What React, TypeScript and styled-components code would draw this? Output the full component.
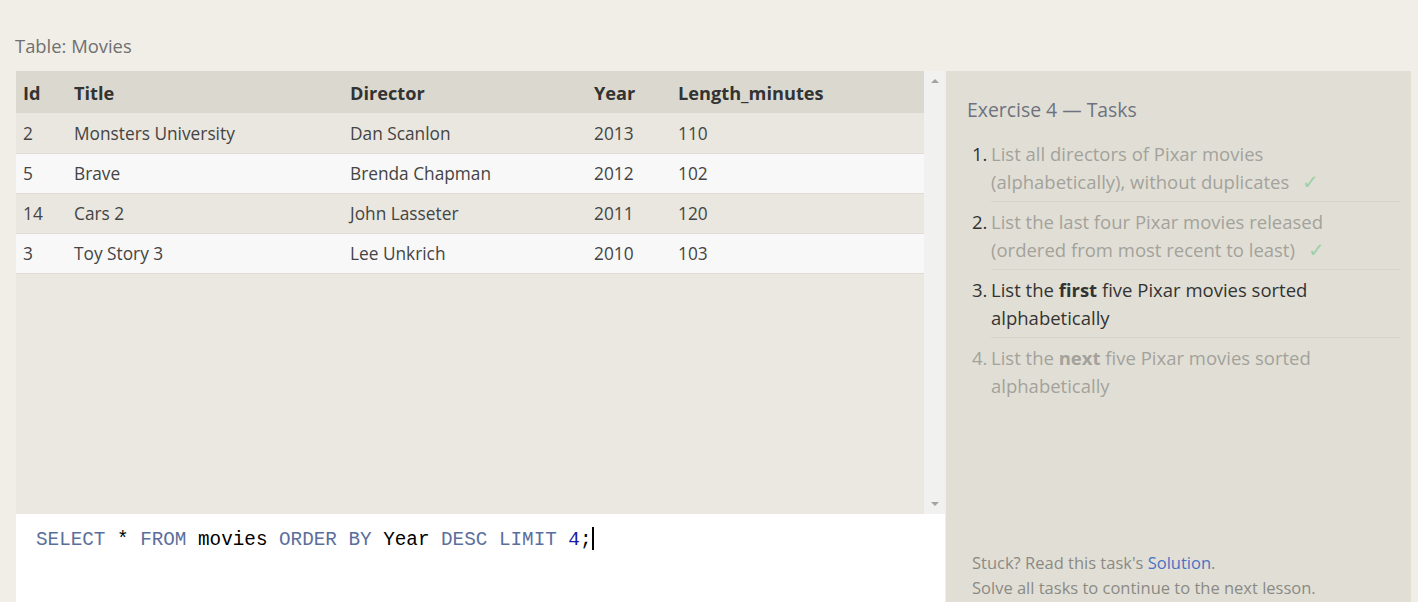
import React from "react";
import styled, { createGlobalStyle } from "styled-components";

const Global = createGlobalStyle`
  html, body { margin: 0; padding: 0; background: #f0eee7; }
  body { font-family: "Open Sans", "Noto Sans", sans-serif; overflow: hidden; }
`;

const Page = styled.div`
  width: 1418px;
  height: 602px;
  padding: 33px 7px 0 16px;
  box-sizing: border-box;
  display: flex;
  flex-direction: column;
`;

const Caption = styled.div`
  font-size: 18.4px;
  color: #707070;
  height: 38px;
  margin-left: -1px;
  line-height: 26px;
`;

const Main = styled.div`
  flex: 1;
  display: flex;
  gap: 1px;
  min-height: 0;
`;

const LeftCol = styled.div`
  width: 929px;
  display: flex;
  flex-direction: column;
`;

const TableArea = styled.div`
  height: 443px;
  display: flex;
  background: #eae8e1;
`;

const TableWrap = styled.div`
  flex: 1;
`;

const Table = styled.table`
  width: 100%;
  table-layout: fixed;
  border-collapse: collapse;
  font-size: 17.3px;
`;

const Th = styled.th<{ $w: number }>`
  box-sizing: border-box;
  width: ${(p) => p.$w}px;
  text-align: left;
  font-weight: 700;
  font-size: 18.2px;
  color: #333;
  height: 42px;
  padding: 1px 0 0 7px;
  background: #dbd9cf;
`;

const Tr = styled.tr<{ $alt: boolean }>`
  background: ${(p) => (p.$alt ? "#f8f8f8" : "#e9e7e0")};
  border-bottom: 1px solid #dedcd4;
`;

const Td = styled.td`
  box-sizing: border-box;
  height: 40px;
  padding: 1px 0 0 7px;
  color: #444;
`;

const Scrollbar = styled.div`
  width: 21px;
  background: #f1f1f0;
  display: flex;
  flex-direction: column;
  justify-content: space-between;
  align-items: center;
  padding: 8px 0;
  box-sizing: border-box;
`;

const Arrow = styled.div<{ $down?: boolean }>`
  width: 0;
  height: 0;
  border-left: 4px solid transparent;
  border-right: 4px solid transparent;
  ${(p) =>
    p.$down
      ? "border-top: 4px solid #a3a3a3;"
      : "border-bottom: 4px solid #a3a3a3;"}
`;

const Editor = styled.div`
  flex: 1;
  background: #fff;
  padding: 13px 20px;
  font-family: "Liberation Mono", monospace;
  font-size: 19.3px;
  color: #000;
  white-space: pre;
  line-height: 24px;
`;

const Kw = styled.span`
  color: #5a6e9c;
`;
const Num = styled.span`
  color: #1a1aa6;
`;
const Caret = styled.span`
  display: inline-block;
  width: 2px;
  height: 23px;
  background: #000;
  vertical-align: -5px;
`;

const Side = styled.div`
  width: 465px;
  background: #e1dfd5;
  display: flex;
  flex-direction: column;
  padding: 24px 11px 0 22px;
  box-sizing: border-box;
`;

const SideTitle = styled.div`
  font-size: 19.4px;
  color: #6e7280;
  line-height: 30px;
  margin-left: -1px;
  margin-bottom: 9px;
`;

const TaskList = styled.ol`
  list-style: none;
  margin: 0;
  padding: 0;
`;

const Task = styled.li<{ $state: "done" | "current" | "todo" }>`
  display: flex;
  font-size: 18.5px;
  line-height: 28px;
  padding: 6px 0 6px 4px;
  color: ${(p) => (p.$state === "current" ? "#333" : "#a3a29c")};
  position: relative;
  &:not(:first-child)::before {
    content: "";
    position: absolute;
    top: -1px;
    left: 23px;
    right: 0;
    height: 1px;
    background: #d6d4ca;
  }
`;

const TaskNum = styled.span<{ $dark: boolean }>`
  width: 19px;
  flex: none;
  color: ${(p) => (p.$dark ? "#333" : "inherit")};
`;

const TaskText = styled.span`
  width: 345px;
  b { font-weight: 700; color: inherit; }
`;

const Check = styled.span`
  color: #9fd0a8;
  font-size: 20px;
  margin-left: 13px;
`;

const Footer = styled.div`
  margin-top: auto;
  padding: 0 0 0 4px;
  font-size: 16.5px;
  line-height: 25px;
  color: #8b8a86;
  margin-bottom: 2px;
`;

const Link = styled.a`
  color: #4a72c4;
  text-decoration: none;
`;

const rows = [
  ["2", "Monsters University", "Dan Scanlon", "2013", "110"],
  ["5", "Brave", "Brenda Chapman", "2012", "102"],
  ["14", "Cars 2", "John Lasseter", "2011", "120"],
  ["3", "Toy Story 3", "Lee Unkrich", "2010", "103"],
];

export default function App() {
  return (
    <>
      <Global />
      <Page>
        <Caption>Table: Movies</Caption>
        <Main>
          <LeftCol>
            <TableArea>
              <TableWrap>
                <Table>
                  <thead>
                    <tr>
                      <Th $w={51}>Id</Th>
                      <Th $w={276}>Title</Th>
                      <Th $w={244}>Director</Th>
                      <Th $w={84}>Year</Th>
                      <Th $w={253}>Length_minutes</Th>
                    </tr>
                  </thead>
                  <tbody>
                    {rows.map((r, i) => (
                      <Tr key={i} $alt={i % 2 === 1}>
                        {r.map((c, j) => (
                          <Td key={j}>{c}</Td>
                        ))}
                      </Tr>
                    ))}
                  </tbody>
                </Table>
              </TableWrap>
              <Scrollbar>
                <Arrow />
                <Arrow $down />
              </Scrollbar>
            </TableArea>
            <Editor>
              <Kw>SELECT</Kw> * <Kw>FROM</Kw> movies <Kw>ORDER BY</Kw> Year{" "}
              <Kw>DESC</Kw> <Kw>LIMIT</Kw> <Num>4</Num>;<Caret />
            </Editor>
          </LeftCol>
          <Side>
            <SideTitle>Exercise 4 — Tasks</SideTitle>
            <TaskList>
              <Task $state="done">
                <TaskNum $dark>1.</TaskNum>
                <TaskText>
                  List all directors of Pixar movies (alphabetically), without
                  duplicates<Check>✓</Check>
                </TaskText>
              </Task>
              <Task $state="done">
                <TaskNum $dark>2.</TaskNum>
                <TaskText>
                  List the last four Pixar movies released (ordered from most
                  recent to least)<Check>✓</Check>
                </TaskText>
              </Task>
              <Task $state="current">
                <TaskNum $dark>3.</TaskNum>
                <TaskText>
                  List the <b>first</b> five Pixar movies sorted alphabetically
                </TaskText>
              </Task>
              <Task $state="todo">
                <TaskNum $dark={false}>4.</TaskNum>
                <TaskText>
                  List the <b>next</b> five Pixar movies sorted alphabetically
                </TaskText>
              </Task>
            </TaskList>
            <Footer>
              Stuck? Read this task's <Link href="#">Solution</Link>.
              <br />
              Solve all tasks to continue to the next lesson.
            </Footer>
          </Side>
        </Main>
      </Page>
    </>
  );
}
